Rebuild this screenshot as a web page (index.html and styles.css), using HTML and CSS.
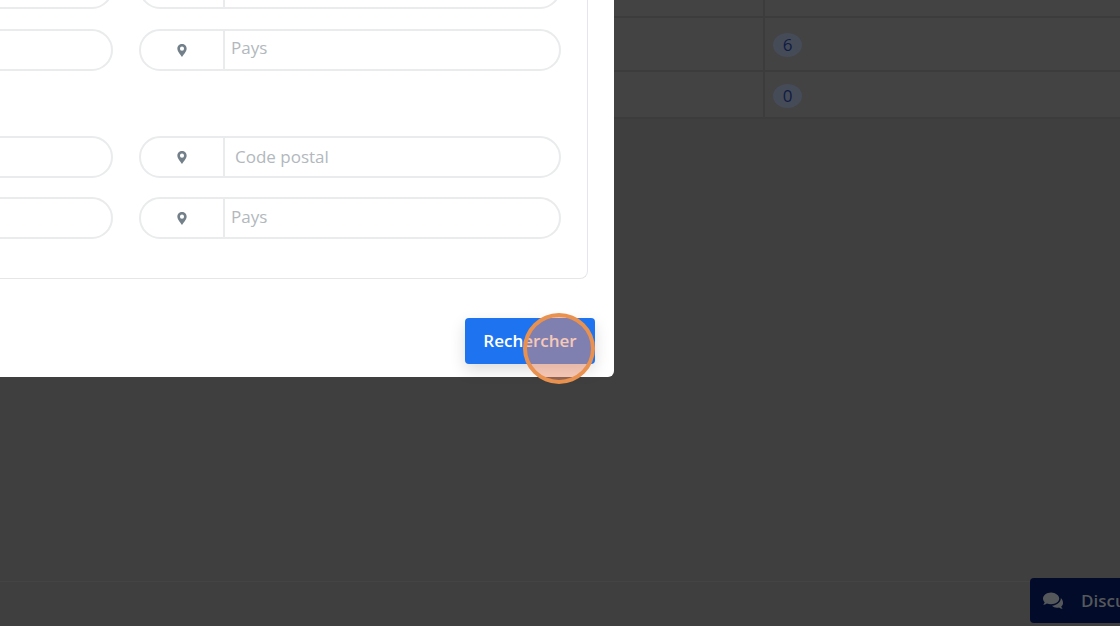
FILE: index.html
```html
<!DOCTYPE html>
<html lang="fr">
<head>
    <meta charset="UTF-8" />
    <meta name="viewport" content="width=device-width, initial-scale=1" />
    <title>Rechercher</title>
    <link rel="stylesheet" href="styles.css">
</head>
<body>

<!-- Page derriere la modale -->
<div class="table">
    <div class="row row-first">
        <div class="cell"></div>
        <div class="cell cell-count"><span class="badge badge-cut"></span></div>
    </div>
    <div class="row row-second">
        <div class="cell"></div>
        <div class="cell cell-count"><span class="badge">6</span></div>
    </div>
    <div class="row row-third">
        <div class="cell"></div>
        <div class="cell cell-count"><span class="badge">0</span></div>
    </div>
</div>

<footer class="page-footer"></footer>

<a href="#" class="chat">
    <svg class="chat-icon" viewBox="0 0 22 18" width="21" height="18">
        <path fill="#55585b" d="M8.500 0C3.800 0 0 2.900 0 6.400c0 1.500.7 2.900 1.800 4-.3 1-.9 1.900-1.600 2.600 1.400-.1 2.800-.6 3.900-1.400 1.300.5 2.800.8 4.400.8 4.700 0 8.500-2.800 8.500-6S13.200 0 8.500 0z"/>
        <path fill="#55585b" d="M18.700 5.900c.1 3.900-3.700 7.600-9.300 8.100 1.200 1.300 3.100 2.100 5.200 2.100.8 0 1.500-.1 2.200-.3 1 .8 2.300 1.300 3.800 1.400-.7-.7-1.200-1.500-1.500-2.500 1.200-.9 1.900-2.200 1.900-3.600 0-2.200-1.100-4-2.300-5.200z"/>
    </svg>
    <span class="chat-label">Discu</span>
</a>

<div class="modal">
    <div class="panel">
        <div class="fields">
            <div class="field"></div>
            <div class="field"><span class="addon"></span><span class="placeholder"></span></div>

            <div class="field"></div>
            <div class="field">
                <span class="addon">
                    <svg class="pin" viewBox="0 0 10 14" width="10" height="13"><path fill-rule="evenodd" d="M5 0C2.200 0 0 2.200 0 5c0 2.800 3.800 6.900 5 9 1.200-2.100 5-6.200 5-9 0-2.800-2.200-5-5-5zm0 7.200A2.200 2.200 0 1 1 5 2.800a2.200 2.200 0 0 1 0 4.400z"/></svg>
                </span>
                <span class="placeholder placeholder-high">Pays</span>
            </div>
        </div>

        <div class="fields fields-second">
            <div class="field"></div>
            <div class="field">
                <span class="addon">
                    <svg class="pin" viewBox="0 0 10 14" width="10" height="13"><path fill-rule="evenodd" d="M5 0C2.200 0 0 2.200 0 5c0 2.800 3.800 6.900 5 9 1.200-2.100 5-6.200 5-9 0-2.800-2.200-5-5-5zm0 7.200A2.200 2.200 0 1 1 5 2.800a2.200 2.200 0 0 1 0 4.400z"/></svg>
                </span>
                <span class="placeholder placeholder-postal">Code postal</span>
            </div>

            <div class="field"></div>
            <div class="field">
                <span class="addon">
                    <svg class="pin" viewBox="0 0 10 14" width="10" height="13"><path fill-rule="evenodd" d="M5 0C2.200 0 0 2.200 0 5c0 2.800 3.800 6.900 5 9 1.200-2.100 5-6.200 5-9 0-2.800-2.200-5-5-5zm0 7.200A2.200 2.200 0 1 1 5 2.800a2.200 2.200 0 0 1 0 4.400z"/></svg>
                </span>
                <span class="placeholder">Pays</span>
            </div>
        </div>
    </div>

    <div class="modal-actions">
        <a href="#" class="btn-search">Rechercher</a>
    </div>
</div>

<!-- Repere du clic -->
<div class="click-mark"></div>

</body>
</html>
```

FILE: styles.css
```css
html, body {
    height: 100%;
}
body {
    margin: 0;
    background-color: #3f3f3f;
    font-family: "Open Sans", Arial, sans-serif;
    overflow: hidden;
    position: relative;
}
.table {
    background-color: #434343;
    border-bottom: 2px solid #3c3c3c;
}
.row {
    display: grid;
    grid-template-columns: 765px 1fr;
    border-bottom: 2px solid #3c3c3c;
}
.row:last-child {
    border-bottom: none;
}
.row-first {
    height: 16px;
}
.row-second {
    height: 52px;
}
.row-third {
    height: 45px;
}
.cell {
    border-right: 2px solid #3c3c3c;
}
.cell-count {
    border-right: none;
    display: flex;
    align-items: center;
    padding-left: 8px;
}
.badge {
    display: block;
    width: 29px;
    height: 24px;
    margin-top: 2px;
    border-radius: 50%;
    background-color: #464b58;
    color: #101b42;
    font-size: 17px;
    line-height: 24px;
    text-align: center;
}
.badge-cut {
    margin-top: -46px;
}
.page-footer {
    position: absolute;
    left: 0;
    right: 0;
    bottom: 0;
    height: 44px;
    border-top: 1px solid #444444;
}
.chat {
    position: absolute;
    top: 578px;
    left: 1030px;
    width: 90px;
    height: 45px;
    box-sizing: border-box;
    display: flex;
    align-items: center;
    gap: 17px;
    padding-left: 13px;
    background-color: #020b29;
    border-radius: 4px 0 0 4px;
    color: #55585b;
    font-size: 17px;
    font-weight: 600;
    text-decoration: none;
    white-space: nowrap;
}
.chat-icon {
    flex: none;
}
.modal {
    position: absolute;
    top: -60px;
    left: -362px;
    width: 976px;
    height: 437px;
    box-sizing: border-box;
    padding: 0 19px 0 27px;
    background-color: #fff;
    border-radius: 6px;
}
.panel {
    width: 923px;
    box-sizing: border-box;
    margin-top: 27px;
    padding: 0 26px 39px 26px;
    border: 1px solid #e4e6e8;
    border-top: none;
    border-left: none;
    border-radius: 8px;
}
.fields {
    display: grid;
    grid-template-columns: 422px 422px;
    column-gap: 26px;
    row-gap: 20px;
}
.fields-second {
    margin-top: 65px;
    row-gap: 19px;
}
.field {
    height: 42px;
    box-sizing: border-box;
    display: flex;
    align-items: center;
    border: 2px solid #e9ebec;
    border-radius: 21px;
}
.addon {
    flex: none;
    width: 84px;
    height: 100%;
    box-sizing: border-box;
    display: flex;
    align-items: center;
    justify-content: center;
    border-right: 2px solid #e9ebec;
}
.pin {
    fill: #73808a;
}
.placeholder {
    padding: 0 0 4px 6px;
    color: #b2b8bd;
    font-size: 17px;
}
.placeholder-high {
    padding-bottom: 6px;
}
.placeholder-postal {
    padding: 0 0 2px 10px;
}
.modal-actions {
    display: flex;
    justify-content: flex-end;
    margin-top: 39px;
}
.btn-search {
    width: 130px;
    height: 46px;
    line-height: 46px;
    text-align: center;
    background-color: #1e74f0;
    border-radius: 4px;
    color: #fff;
    font-size: 17px;
    font-weight: 600;
    text-decoration: none;
    box-shadow: 0 6px 16px rgba(0,0,0,0.14);
}
.click-mark {
    position: absolute;
    left: 523px;
    top: 313px;
    width: 72px;
    height: 71px;
    box-sizing: border-box;
    border: 4px solid #e9914e;
    border-radius: 50%;
    background-color: rgba(234,140,106,0.48);
}
```
